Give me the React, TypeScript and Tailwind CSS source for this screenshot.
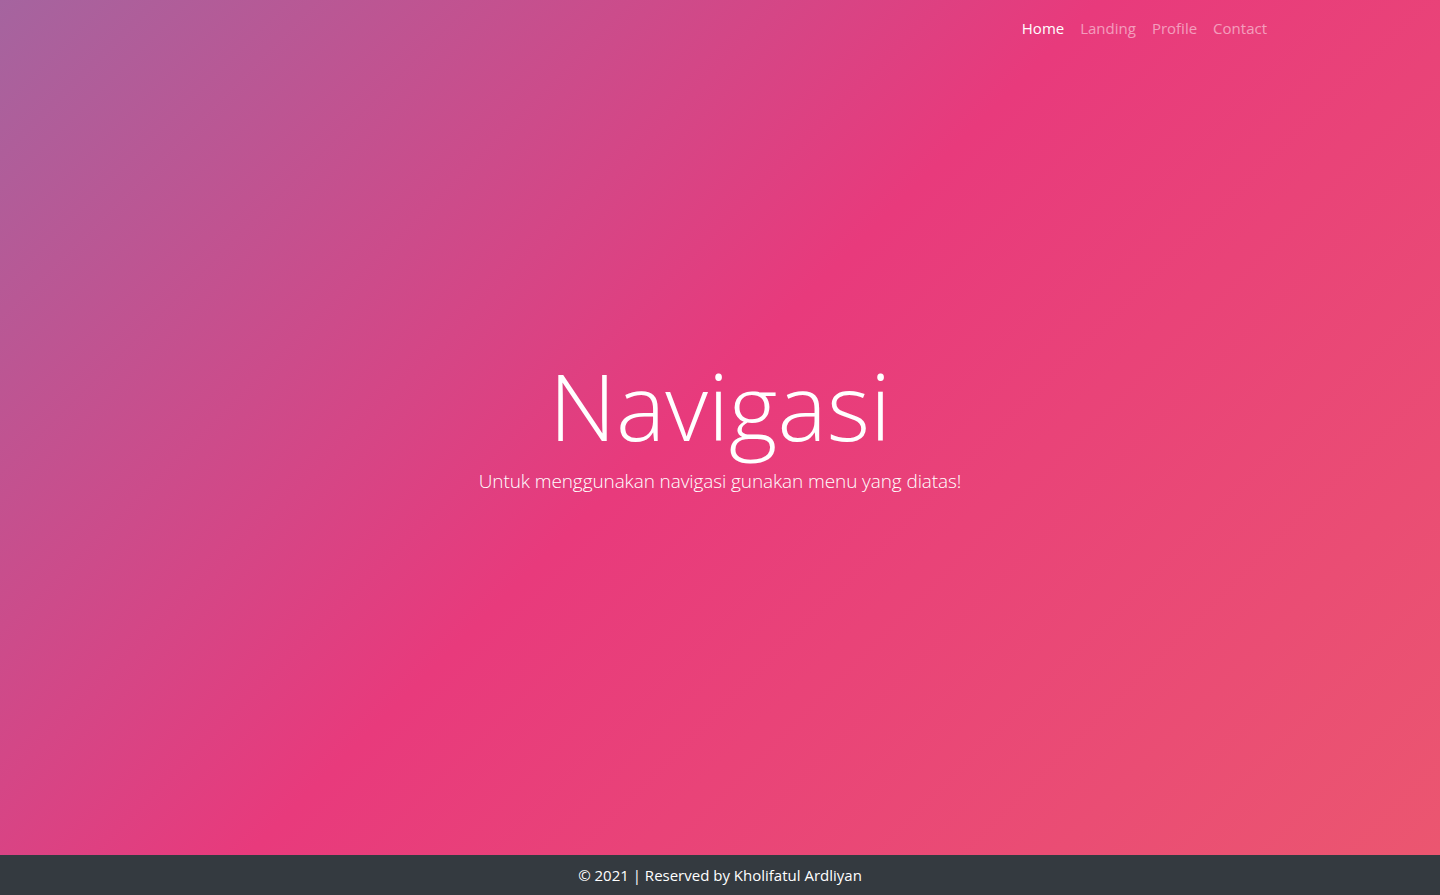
import React from "react";

export default function App() {
  const font = { fontFamily: '"Open Sans", "Noto Sans", sans-serif' };
  return (
    <div className="flex h-[895px] w-full flex-col" style={font}>
      <div className="flex flex-1 flex-col bg-[linear-gradient(135deg,#a5649f_0%,#e83a7c_48%,#eb5670_100%)] text-white">
        <header className="flex h-14 items-center justify-end pr-[173px]">
          <nav className="flex gap-4 text-[15px]">
            <a className="text-white">Home</a>
            <a className="text-white/50">Landing</a>
            <a className="text-white/50">Profile</a>
            <a className="text-white/50">Contact</a>
          </nav>
        </header>
        <main className="flex flex-1 flex-col items-center justify-center pb-[66px]">
          <h1 className="text-[93px] font-light leading-[1.2]">Navigasi</h1>
          <p className="mt-[5px] text-[19px] font-light leading-[1.5] tracking-[-0.1px]">Untuk menggunakan navigasi gunakan menu yang diatas!</p>
        </main>
      </div>
      <footer className="flex h-10 items-center justify-center bg-[#343a40] text-[15px] text-white">
        © 2021 | Reserved by Kholifatul Ardliyan
      </footer>
    </div>
  );
}
